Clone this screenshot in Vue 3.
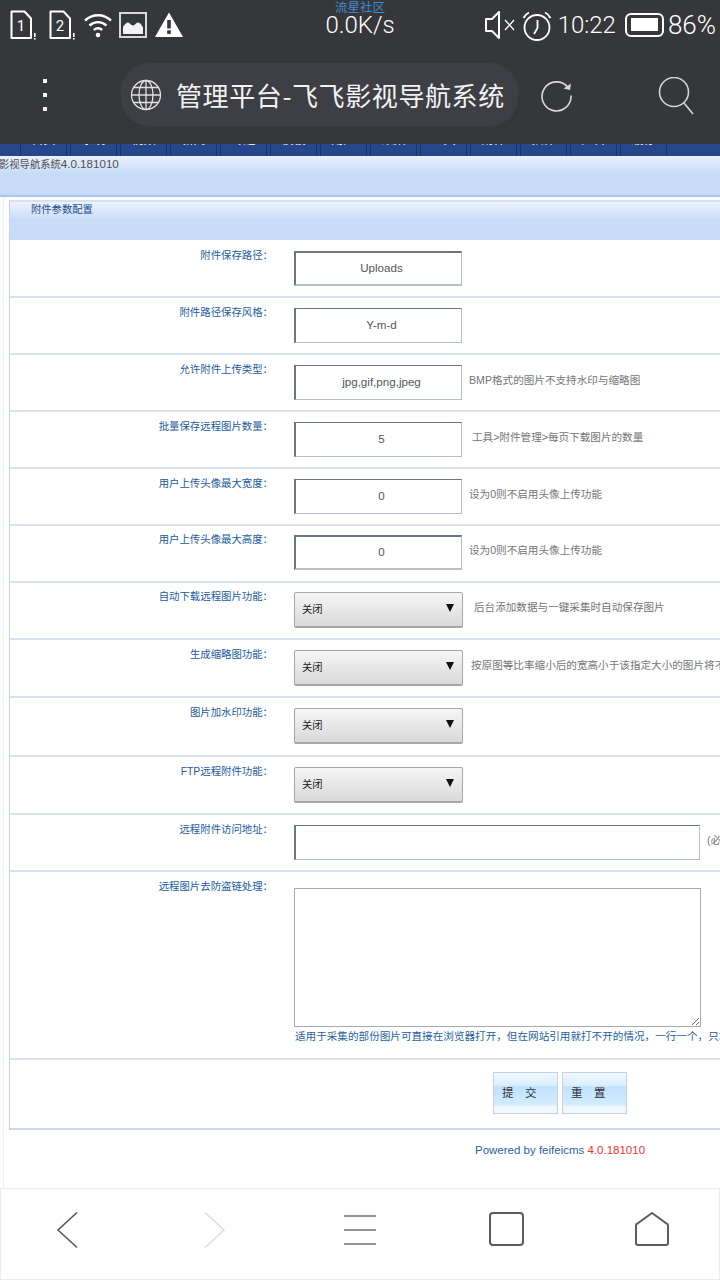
<script setup>
const tabs = ['首页', '系统', '视频', '新闻', '专题', '模板', '用户', '采集', '工具', '附件', '插件', '广告', '缓存']

const rows = [
  { label: '附件保存路径：', kind: 'input', value: 'Uploads', h: 58, top: 11, thick: true },
  { label: '附件路径保存风格：', kind: 'input', value: 'Y-m-d', h: 57, top: 10 },
  { label: '允许附件上传类型：', kind: 'input', value: 'jpg,gif,png,jpeg', h: 57, top: 10, note: 'BMP格式的图片不支持水印与缩略图', gap: 7 },
  { label: '批量保存远程图片数量：', kind: 'input', value: '5', h: 57, top: 10, note: '工具>附件管理>每页下载图片的数量', gap: 10 },
  { label: '用户上传头像最大宽度：', kind: 'input', value: '0', h: 57, top: 10, note: '设为0则不启用头像上传功能', gap: 7 },
  { label: '用户上传头像最大高度：', kind: 'input', value: '0', h: 57, top: 9, note: '设为0则不启用头像上传功能', gap: 7, thick: true },
  { label: '自动下载远程图片功能：', kind: 'select', h: 57, top: 9, note: '后台添加数据与一键采集时自动保存图片', gap: 11 },
  { label: '生成缩略图功能：', kind: 'select', h: 58, top: 10, note: '按原图等比率缩小后的宽高小于该指定大小的图片将不会生成缩略图', gap: 8 },
  { label: '图片加水印功能：', kind: 'select', h: 59, top: 10 },
  { label: 'FTP远程附件功能：', kind: 'select', h: 58, top: 10 },
  { label: '远程附件访问地址：', kind: 'wide', h: 57, top: 10, note: '(必填', gap: 7 }
]
</script>

<template>
  <div class="phone">
    <header class="chrome">
      <div class="status">
        <div class="status-left">
          <span class="sim">
            <svg width="28" height="30" viewBox="0 0 28 30" fill="none">
              <path d="M2.500 1.500h13l6.500 7v19.500h-19.500z" stroke="#fff" stroke-width="2" stroke-linejoin="round" />
              <rect x="25" y="23" width="1.600" height="4" fill="#fff" />
              <rect x="25" y="28" width="1.600" height="1.600" fill="#fff" />
            </svg>
            <b>1</b>
          </span>
          <span class="sim">
            <svg width="28" height="30" viewBox="0 0 28 30" fill="none">
              <path d="M2.500 1.500h13l6.500 7v19.500h-19.500z" stroke="#fff" stroke-width="2" stroke-linejoin="round" />
              <rect x="25" y="23" width="1.600" height="4" fill="#fff" />
              <rect x="25" y="28" width="1.600" height="1.600" fill="#fff" />
            </svg>
            <b>2</b>
          </span>
          <svg class="wifi" width="28" height="25" viewBox="0 0 28 25" fill="none" stroke="#fff" stroke-width="2.400">
            <path d="M1 7.500c7.500-7 18.500-7 26 0" />
            <path d="M5.500 12.500c5-4.500 12-4.500 17 0" />
            <path d="M9.800 17c2.600-2.200 5.800-2.200 8.400 0" />
            <circle cx="14" cy="22" r="2.300" fill="#fff" stroke="none" />
          </svg>
          <svg class="pic" width="28" height="26" viewBox="0 0 28 26" fill="none">
            <rect x="1" y="1" width="26" height="24" stroke="#d8d8d8" stroke-width="2" />
            <path d="M4 22v-7c2-3 3.500-4.500 5-4.500s3 3 5 3 3-3 5-3 4 3 5 5v6.500z" fill="#f2f2f2" />
          </svg>
          <svg class="warn" width="28" height="25" viewBox="0 0 28 25">
            <path d="M14 0.500l14 24.500h-28z" fill="#fff" />
            <rect x="12.200" y="8" width="3.600" height="8.500" fill="#36373b" />
            <rect x="12.200" y="18.300" width="3.600" height="3.600" fill="#36373b" />
          </svg>
        </div>
        <div class="status-mid">
          <span class="brand">流星社区</span>
          <span class="speed">0.0K/s</span>
        </div>
        <div class="status-right">
          <svg width="31" height="28" viewBox="0 0 31 28" fill="none" stroke="#fff">
            <path d="M14 1v26l-7-7h-6v-12h6z" stroke-width="2" stroke-linejoin="round" />
            <path d="M20 9l9 10M29 9l-9 10" stroke-width="1.300" />
          </svg>
          <svg class="alarm" width="30" height="30" viewBox="0 0 30 30" fill="none" stroke="#fff" stroke-width="1.800">
            <circle cx="15" cy="16.500" r="12.500" />
            <path d="M15.500 9v8l-3.500 6" />
            <path d="M1.500 7c1.200-2.600 3-4.300 5.500-5.500M28.500 7c-1.200-2.600-3-4.300-5.500-5.500" />
          </svg>
          <span class="time">10:22</span>
          <span class="battery"><i></i></span>
          <span class="pct">86%</span>
        </div>
      </div>
      <div class="toolbar">
        <div class="dots"><i></i><i></i><i></i></div>
        <div class="pill">
          <svg width="32" height="32" viewBox="0 0 32 32" fill="none" stroke="#e0e0e0" stroke-width="1.300">
            <circle cx="16" cy="16" r="14.500" />
            <ellipse cx="16" cy="16" rx="7" ry="14.500" />
            <path d="M16 1.500v29M1.500 16h29M3.500 8.500h25M3.500 23.500h25" />
          </svg>
          <span class="title">管理平台-飞飞影视导航系统</span>
        </div>
        <svg class="reload" width="34" height="34" viewBox="0 0 34 34" fill="none" stroke="#d8d8d8" stroke-width="1.600">
          <path d="M28 9.500a14.500 14.500 0 1 0 3 8" />
          <path d="M23.500 10.500l6.500 1.500 1-6.500" stroke-width="0" fill="#d8d8d8" />
        </svg>
        <svg class="search" width="36" height="38" viewBox="0 0 36 38" fill="none" stroke="#d4d4d4" stroke-width="1.600">
          <circle cx="16" cy="15" r="14.500" />
          <path d="M26 26l9 11" />
        </svg>
      </div>
    </header>

    <nav class="tabs">
      <span v-for="t in tabs" :key="t" class="tab">{{ t }}</span>
    </nav>

    <div class="subhead"><span class="sub-cjk">影视导航系统</span><span class="sub-ver">4.0.181010</span></div>

    <main class="page">
      <section class="panel">
        <h2 class="panel-head">附件参数配置</h2>
        <div v-for="r in rows" :key="r.label" class="row" :style="{ height: r.h + 'px', paddingTop: r.top + 'px' }">
          <label class="label">{{ r.label }}</label>
          <div v-if="r.kind === 'input'" class="input" :class="{ thick: r.thick }">{{ r.value }}</div>
          <div v-else-if="r.kind === 'wide'" class="input wide"></div>
          <div v-else class="select"><span>关闭</span><i></i></div>
          <span v-if="r.note" class="note" :style="{ marginLeft: r.gap + 'px' }">{{ r.note }}</span>
        </div>
        <div class="row area-row">
          <label class="label">远程图片去防盗链处理：</label>
          <div class="area-col">
            <textarea class="area"></textarea>
            <p class="hint">适用于采集的部份图片可直接在浏览器打开，但在网站引用就打不开的情况，一行一个，只填写域名即可</p>
          </div>
        </div>
        <div class="row actions">
          <button class="btn">提　交</button>
          <button class="btn">重　置</button>
        </div>
      </section>
      <footer class="powered">Powered by feifeicms <em>4.0.181010</em></footer>
    </main>

    <nav class="bottom">
      <svg width="40" height="38" viewBox="0 0 40 38" fill="none" stroke="#555" stroke-width="1.500"><path d="M29 0.500l-19 17.500 19 17.500" /></svg>
      <svg width="40" height="38" viewBox="0 0 40 38" fill="none" stroke="#ddd" stroke-width="1.500"><path d="M11 0.500l19 17.500-19 17.500" /></svg>
      <svg width="40" height="38" viewBox="0 0 40 38" fill="none" stroke="#707070" stroke-width="1.500"><path d="M4 4h32M4 18h32M4 32h32" /></svg>
      <svg width="40" height="38" viewBox="0 0 40 38" fill="none" stroke="#5c5c5c" stroke-width="2"><rect x="4" y="1" width="33" height="32" rx="3" /></svg>
      <svg width="40" height="38" viewBox="0 0 40 38" fill="none" stroke="#5c5c5c" stroke-width="2"><path d="M20 1l14.500 10.500a2 2 0 0 1 1.500 2v17.500a2 2 0 0 1-2 2h-28a2 2 0 0 1-2-2v-17.500a2 2 0 0 1 1.500-2z" stroke-linejoin="round" /></svg>
    </nav>
  </div>
</template>

<style scoped>
.phone {
  width: 720px;
  height: 1280px;
  overflow: hidden;
  display: flex;
  flex-direction: column;
  background: #fff;
  font-family: "Liberation Sans", "Noto Sans CJK SC", sans-serif;
}
.chrome {
  height: 144px;
  flex: none;
  background: #36373b;
  color: #fff;
  display: flex;
  flex-direction: column;
}
.status {
  height: 54px;
  display: grid;
  grid-template-columns: 1fr auto 1fr;
  padding: 0 4px 0 9px;
}
.status-left {
  display: flex;
  align-items: flex-start;
  padding-top: 10px;
}
.sim { position: relative; width: 39px; height: 30px; display: block; }
.sim svg { display: block; }
.sim b {
  position: absolute;
  left: 0;
  top: 7px;
  width: 24px;
  text-align: center;
  font: 400 15px/18px Roboto, sans-serif;
}
.wifi { margin: 3px 7px 0 -3px; }
.pic { margin: 2px 8px 0 0; }
.warn { margin-top: 2px; }
.status-mid {
  display: flex;
  flex-direction: column;
  align-items: center;
  margin-left: -5px;
}
.brand {
  color: #3e8ad0;
  font: 400 12.500px/13px "Noto Sans CJK SC", sans-serif;
}
.speed {
  font: 300 24px/24px Roboto, sans-serif;
}
.status-right {
  display: flex;
  justify-content: flex-end;
  align-items: flex-start;
  padding-top: 11px;
  gap: 5px;
}
.alarm { margin: 0 1px; }
.time { font: 300 24px/29px Roboto, sans-serif; }
.pct { font: 300 26px/29px Roboto, sans-serif; }
.battery {
  width: 39px;
  height: 24px;
  margin: 2px -1px 0 4px;
  box-sizing: border-box;
  border: 2.500px solid #fff;
  border-radius: 6px;
  padding: 3px 3px 3px 4px;
  display: block;
}
.battery i { display: block; width: 27px; height: 13px; background: #fff; }
.toolbar {
  height: 90px;
  display: flex;
  align-items: flex-start;
}
.dots {
  width: 121px;
  display: flex;
  flex-direction: column;
  padding: 25px 0 0 43px;
  box-sizing: border-box;
  gap: 10px;
}
.dots i { width: 4px; height: 4px; background: #f4f4f4; display: block; }
.pill {
  width: 397px;
  height: 63px;
  margin-top: 9px;
  background: #3e3f44;
  border-radius: 28px;
  display: flex;
  align-items: center;
  padding-left: 9px;
  box-sizing: border-box;
}
.title {
  margin-left: 14px;
  font: 400 26px/34px "Noto Sans CJK SC", sans-serif;
  letter-spacing: 0.6px;
  color: #f2f2f2;
  white-space: nowrap;
}
.reload { margin: 24px 0 0 22px; }
.search { margin: 23px 0 0 84px; }
.tabs {
  height: 12px;
  flex: none;
  background: #27478a;
  overflow: hidden;
  display: flex;
  padding-left: 20px;
}
.tab {
  flex: none;
  width: 45px;
  height: 23px;
  margin-right: 3px;
  border-left: 1px solid #16336c;
  border-right: 1px solid #16336c;
  color: #fff;
  text-align: center;
  font: 400 12px/12px "Noto Sans CJK SC", sans-serif;
  position: relative;
  top: -11px;
}
.subhead {
  height: 41px;
  flex: none;
  box-sizing: border-box;
  border-bottom: 2px solid #a9c6ee;
  background: linear-gradient(#e9f1fc 0, #c7dcf8 18px, #c6dbf8 100%);
  overflow: hidden;
  font-size: 10px;
  line-height: 15px;
  color: #505050;
  white-space: nowrap;
}
.sub-cjk { font-size: 10.300px; margin-left: -1px; }
.sub-ver { font-size: 11.600px; }
.page {
  flex: 1;
  min-height: 0;
  padding: 3px 0 0 9px;
  position: relative;
  overflow: hidden;
}
.page::before {
  content: "";
  position: absolute;
  left: 3px;
  top: 0;
  bottom: 0;
  width: 1px;
  background: #eef1f4;
}
.panel {
  width: 900px;
  box-sizing: border-box;
  border-left: 1px solid #c3d1e2;
}
.panel-head {
  margin: 0;
  height: 40px;
  box-sizing: border-box;
  border-top: 2px solid #d3e2f6;
  background: linear-gradient(#edf3fd 0, #c8dcf8 18px, #c6dbf8 100%);
  padding: 2px 0 0 21px;
  font-weight: 400;
  font-size: 10.300px;
  line-height: 11px;
  color: #1c4f8c;
}
.row {
  display: flex;
  align-items: flex-start;
  box-sizing: border-box;
  border-bottom: 2px solid #d8e4f2;
  white-space: nowrap;
}
.label {
  flex: none;
  width: 263px;
  text-align: right;
  font-size: 10.400px;
  line-height: 12px;
  margin: -1px 21px 0 0;
  color: #1c5b9c;
}
.input {
  flex: none;
  width: 168px;
  height: 35px;
  box-sizing: border-box;
  border: 1px solid #b6bec7;
  border-top-color: #6c7680;
  border-left: 2px solid #6c7680;
  padding-left: 6px;
  text-align: center;
  font-size: 11.600px;
  line-height: 31px;
  color: #555;
}
.input.thick { border-top-width: 2px; border-bottom-width: 2px; line-height: 29px; }
.input.wide { width: 406px; }
.select {
  flex: none;
  width: 169px;
  height: 36px;
  box-sizing: border-box;
  border: 1px solid #a6a6a6;
  border-bottom-width: 2px;
  border-radius: 2px;
  background: linear-gradient(#f6f6f6, #d9d9d9);
  display: flex;
  align-items: center;
  justify-content: space-between;
  padding: 0 8px 3px 7px;
  font-size: 10.300px;
  color: #222;
}
.select i {
  width: 0;
  height: 0;
  border-left: 4px solid transparent;
  border-right: 4px solid transparent;
  border-top: 8px solid #111;
}
.note {
  font-size: 10.600px;
  line-height: 30px;
  color: #757575;
}
.area-row { height: 188px; padding-top: 10px; }
.area-col { display: flex; flex-direction: column; padding-top: 6px; }
.area {
  display: block;
  width: 407px;
  height: 139px;
  margin: 0;
  box-sizing: border-box;
  border: 1px solid #a9a9a9;
  background: #fff;
  border-radius: 0;
}
.hint {
  margin: 2px 0 0 1px;
  font-size: 10.600px;
  line-height: 14px;
  color: #1f5f9e;
}
.actions {
  height: 70px;
  padding: 12px 0 0 483px;
  gap: 4px;
  border-bottom-color: #ccdaeb;
}
.btn {
  width: 65px;
  height: 42px;
  padding: 0 0 3px 8px;
  box-sizing: border-box;
  border: 1px solid #c4d1e6;
  background: linear-gradient(#f0f8ff 0, #dcefff 30%, #bfe2fd 35%, #d4ecff 80%, #eef7ff 83%, #f2f8ff 100%);
  font-family: "Noto Sans CJK SC", sans-serif;
  font-size: 11.500px;
  text-align: left;
  color: #333;
  white-space: nowrap;
}
.powered {
  padding: 12px 0 0 466px;
  font-size: 11.500px;
  line-height: 16px;
  color: #2f5f9e;
}
.powered em { font-style: normal; color: #f03030; }
.bottom {
  flex: none;
  height: 92px;
  box-sizing: border-box;
  border: 1px solid #e8edf1;
  background: #fefefe;
  display: flex;
  justify-content: space-between;
  padding: 23px 47px 0 47px;
}
</style>

<style>
html, body { margin: 0; background: #fff; }
</style>
